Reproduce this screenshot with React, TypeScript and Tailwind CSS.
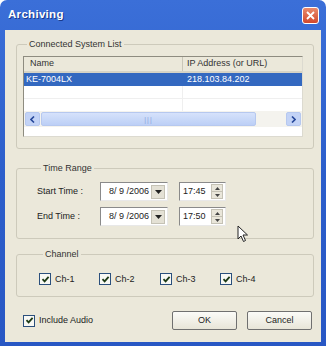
import React from "react";

const font = { fontFamily: '"Liberation Sans", Arial, sans-serif' };

function Check({ label, className = "" }: { label: string; className?: string }) {
  return (
    <div className={`flex items-center gap-[4px] ${className}`}>
      <div className="flex h-[12px] w-[12px] items-center justify-center border border-[#2a4f7c] bg-[#f8f8f4]">
        <svg width="9" height="9" viewBox="0 0 9 9">
          <path d="M1.5 4.2 L3.6 6.4 L7.6 1.8" stroke="#1d3b16" strokeWidth="1.8" fill="none" />
        </svg>
      </div>
      <span className="text-[9px] leading-none text-[#222]">{label}</span>
    </div>
  );
}

function Combo({ value }: { value: string }) {
  return (
    <div className="flex h-[19px] w-[68px] items-center border border-[#8a8a8a] border-b-[#e8e8e8] border-r-[#e8e8e8] bg-white pl-[8px] pr-[2px]">
      <span className="flex-1 text-[9px] text-[#222]">{value}</span>
      <div className="flex h-[14px] w-[14px] items-center justify-center border border-[#c5c2b5] bg-[#e4e1d5]">
        <svg width="7" height="4" viewBox="0 0 7 4">
          <path d="M0 0 H7 L3.5 4 Z" fill="#222" />
        </svg>
      </div>
    </div>
  );
}

function Spin({ value }: { value: string }) {
  return (
    <div className="flex h-[19px] w-[47px] items-center border border-[#8a8a8a] border-b-[#e8e8e8] border-r-[#e8e8e8] bg-white pl-[3px] pr-[2px]">
      <span className="flex-1 text-[9px] text-[#222]">{value}</span>
      <div className="flex h-[15px] w-[12px] flex-col">
        <div className="flex flex-1 items-center justify-center border border-[#c5c2b5] bg-[#e9e6da]">
          <svg width="5" height="3" viewBox="0 0 5 3">
            <path d="M0 3 H5 L2.5 0 Z" fill="#444" />
          </svg>
        </div>
        <div className="flex flex-1 items-center justify-center border border-t-0 border-[#c5c2b5] bg-[#e9e6da]">
          <svg width="5" height="3" viewBox="0 0 5 3">
            <path d="M0 0 H5 L2.5 3 Z" fill="#444" />
          </svg>
        </div>
      </div>
    </div>
  );
}

function Group({ title, className = "", children }: { title: string; className?: string; children: React.ReactNode }) {
  return (
    <fieldset className={`rounded-[3px] border border-[#cdcabb] ${className}`}>
      <legend className="ml-[4px] px-[2px] text-[9px] leading-[13px] text-[#333]">{title}</legend>
      {children}
    </fieldset>
  );
}

function XPButton({ label }: { label: string }) {
  return (
    <div className="flex h-[19px] w-[65px] items-center justify-center rounded-[2px] border border-[#707070] bg-gradient-to-b from-[#fbfbf8] to-[#e8e5d8] text-[9px] text-[#222]">
      {label}
    </div>
  );
}

export default function App() {
  return (
    <div className="relative h-[349px] w-[326px] bg-white" style={font}>
      <div className="flex h-[346px] w-[326px] flex-col rounded-t-[7px] bg-gradient-to-b from-[#3b6fd8] via-[#2c5ecb] to-[#2857c4] px-[5px] pb-[4px]">
        {/* title bar */}
        <div className="flex h-[30px] shrink-0 items-center justify-between pl-[3px] pr-[2px]">
          <span className="text-[11.5px] font-bold tracking-[0.3px] text-white [text-shadow:1px_1px_0_#1a3a8a]">Archiving</span>
          <div className="flex h-[17px] w-[17px] items-center justify-center rounded-[3px] border border-white bg-gradient-to-b from-[#e98a6c] to-[#d2472a]">
            <svg width="9" height="9" viewBox="0 0 9 9">
              <path d="M1 1 L8 8 M8 1 L1 8" stroke="white" strokeWidth="1.8" />
            </svg>
          </div>
        </div>

        {/* body */}
        <div className="flex flex-1 flex-col bg-[#ebe8da] pl-[11px] pr-[7px] pt-[8px]">
          <Group title="Connected System List" className="pb-[11px] pl-[6px] pr-[10px] pt-[5px]">
            <div className="flex h-[81px] flex-col border border-[#8e8c80] border-b-[#dcdad0] border-r-[#dcdad0] bg-white">
              <div className="flex h-[16px] border-b-2 border-[#d6d3c5] bg-[#ebe8da] text-[9px] text-[#333]">
                <div className="flex w-[159px] items-center border-r border-[#c9c6b8] pl-[6px]">Name</div>
                <div className="flex flex-1 items-center pl-[4px]">IP Address (or URL)</div>
              </div>
              <div className="flex h-[13px] bg-[#3368c0] text-[9px] text-white">
                <div className="flex w-[159px] items-center pl-[2px]">KE-7004LX</div>
                <div className="flex flex-1 items-center pl-[4px]">218.103.84.202</div>
              </div>
              <div className="flex h-[13px] border-b border-[#efefef]">
                <div className="w-[159px] border-r border-[#efefef]" />
              </div>
              <div className="flex h-[12px]">
                <div className="w-[159px] border-r border-[#efefef]" />
              </div>
              <div className="flex h-[16px] items-center gap-[1px] bg-[#f4f3ee] px-[1px]">
                <div className="flex h-[14px] w-[15px] items-center justify-center rounded-[2px] border border-[#b6c8ef] bg-[#c3d3f6]">
                  <svg width="5" height="7" viewBox="0 0 5 7">
                    <path d="M4 0.5 L1 3.5 L4 6.5" stroke="#26489a" strokeWidth="1.6" fill="none" />
                  </svg>
                </div>
                <div className="flex h-[14px] w-[215px] items-center justify-center rounded-[2px] border border-[#b6c8ef] bg-gradient-to-b from-[#d6e2fb] to-[#bccff6]">
                  <span className="text-[7px] leading-none tracking-[1px] text-[#8aa3dc]">|||</span>
                </div>
                <div className="flex-1" />
                <div className="flex h-[14px] w-[15px] items-center justify-center rounded-[2px] border border-[#b6c8ef] bg-[#c3d3f6]">
                  <svg width="5" height="7" viewBox="0 0 5 7">
                    <path d="M1 0.5 L4 3.5 L1 6.5" stroke="#26489a" strokeWidth="1.6" fill="none" />
                  </svg>
                </div>
              </div>
            </div>
          </Group>

          <Group title="Time Range" className="mt-[13px] flex flex-col gap-[6px] pb-[12px] pl-[20px] pt-[7px]">
            <div className="flex items-center">
              <span className="w-[63px] text-[9px] text-[#222]">Start Time :</span>
              <Combo value="8/ 9 /2006" />
              <div className="w-[11px]" />
              <Spin value="17:45" />
            </div>
            <div className="flex items-center">
              <span className="w-[63px] text-[9px] text-[#222]">End Time :</span>
              <Combo value="8/ 9 /2006" />
              <div className="w-[11px]" />
              <Spin value="17:50" />
            </div>
          </Group>

          <Group title="Channel" className="mt-[9px] flex pb-[11px] pl-[22px] pt-[12px]">
            <Check label="Ch-1" className="w-[60px]" />
            <Check label="Ch-2" className="w-[61px]" />
            <Check label="Ch-3" className="w-[60px]" />
            <Check label="Ch-4" />
          </Group>

          <div className="mt-[14px] flex items-center">
            <Check label="Include Audio" className="ml-[7px] flex-1" />
            <div className="flex gap-[10px] pr-[2px]">
              <XPButton label="OK" />
              <XPButton label="Cancel" />
            </div>
          </div>
        </div>
      </div>

      {/* mouse cursor */}
      <svg className="absolute left-[237px] top-[225px]" width="12" height="18" viewBox="0 0 12 18">
        <path d="M1 1 L1 14 L4 11 L6.5 16.5 L8.5 15.5 L6 10 L10.5 10 Z" fill="white" stroke="#222" strokeWidth="1" />
      </svg>
    </div>
  );
}
